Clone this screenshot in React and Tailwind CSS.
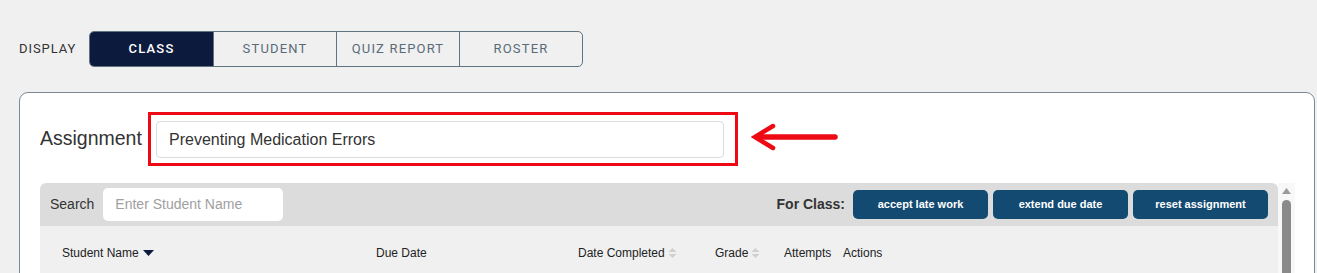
import React from "react"

const tabs = ["CLASS", "STUDENT", "QUIZ REPORT", "ROSTER"]

function SortBoth() {
  return (
    <svg width="9" height="12" viewBox="0 0 9 12" className="ml-[3px] inline-block">
      <path d="M0.5 5 L4.5 1 L8.5 5 Z" fill="#cfcfcf" />
      <path d="M0.5 7 L4.5 11 L8.5 7 Z" fill="#cfcfcf" />
    </svg>
  )
}

function SortDown() {
  return (
    <svg width="11" height="6" viewBox="0 0 11 6" className="ml-[4px] inline-block">
      <path d="M0 0 L11 0 L5.5 6 Z" fill="#0b1a3d" />
    </svg>
  )
}

export default function App() {
  return (
    <div className="min-h-screen h-[273px] overflow-hidden bg-[#f0f0f0] font-['Liberation_Sans',Arial,sans-serif]">
      {/* display switcher */}
      <div className="flex items-center pt-[31px] pl-[19px]">
        <span className="w-[70px] font-['Roboto',sans-serif] text-[13px] tracking-[0.07em] text-[#333]">DISPLAY</span>
        <div className="flex h-[36px] rounded-[5px] border border-[#5f7380] overflow-hidden">
          {tabs.map((t, i) => (
            <div
              key={t}
              className={`flex w-[123px] items-center justify-center font-['Roboto',sans-serif] text-[13px] tracking-[0.09em] ${
                i === 0 ? "bg-[#0b1a3d] text-white font-medium" : "text-[#5a6b78] border-l border-[#5f7380]"
              }`}
            >
              {t}
            </div>
          ))}
        </div>
      </div>

      {/* panel */}
      <div className="mt-[25px] ml-[19px] w-[1296px] h-[200px] rounded-[9px] border border-[#7b8a95] bg-white pl-[20px] pt-[19px]">
        <div className="flex items-center">
          <span className="w-[108px] text-[19.5px] text-[#333]">Assignment</span>
          <div className="border-[3px] border-[#ee0a14] pl-[5px] pr-[11px] pt-[6px] pb-[5px]">
            <div className="flex h-[37px] w-[568px] items-center rounded-[4px] border border-[#dcdcdc] px-[12px] text-[16px] text-[#333]">
              Preventing Medication Errors
            </div>
          </div>
          <svg width="90" height="30" viewBox="0 0 90 30" className="ml-[13px] -mt-[5px]">
            <path d="M84 15 L6 15" stroke="#ee0a14" strokeWidth="5.5" strokeLinecap="round" />
            <path d="M22 4 L4 15 L22 26" fill="none" stroke="#ee0a14" strokeWidth="4.5" strokeLinecap="round" strokeLinejoin="miter" />
          </svg>
        </div>

        <div className="mt-[17px] flex">
          <div className="w-[1238px]">
            <div className="flex h-[43px] items-center rounded-t-[6px] bg-[#dcdcdc] pl-[10px] pr-[10px]">
              <span className="text-[14px] text-[#333]">Search</span>
              <div className="ml-[9px] flex h-[33px] w-[180px] items-center rounded-[5px] bg-white px-[12px] text-[14px] text-[#a0a0a0]">
                Enter Student Name
              </div>
              <span className="ml-auto mr-[8px] text-[14px] font-bold text-[#333]">For Class:</span>
              <div className="flex gap-[5px]">
                {["accept late work", "extend due date", "reset assignment"].map((b) => (
                  <div
                    key={b}
                    className="flex h-[29px] w-[135px] items-center justify-center rounded-[5px] bg-[#134a72] text-[11px] font-bold text-white"
                  >
                    {b}
                  </div>
                ))}
              </div>
            </div>
            <div className="h-[60px] bg-[#f0f0f0] pl-[22px] pt-[18px]">
              <div className="grid grid-cols-[314px_202px_137px_69px_59px_1fr] text-[12px] leading-[16px] text-[#222]">
                <div className="flex items-center">Student Name<SortDown /></div>
                <div className="flex items-center pt-[1px]">Due Date</div>
                <div className="flex items-center">Date Completed<SortBoth /></div>
                <div className="flex items-center">Grade<SortBoth /></div>
                <div className="flex items-center">Attempts</div>
                <div className="flex items-center">Actions</div>
              </div>
            </div>
          </div>
          {/* scrollbar */}
          <div className="flex w-[17px] flex-col items-center bg-[#f8f8f8] pt-[5px]">
            <svg width="9" height="6" viewBox="0 0 9 6">
              <path d="M0 6 L4.5 0 L9 6 Z" fill="#9a9a9a" />
            </svg>
            <div className="mt-[6px] h-[100px] w-[9px] rounded-t-[5px] bg-[#8a8a8a]" />
          </div>
        </div>
      </div>
    </div>
  )
}
